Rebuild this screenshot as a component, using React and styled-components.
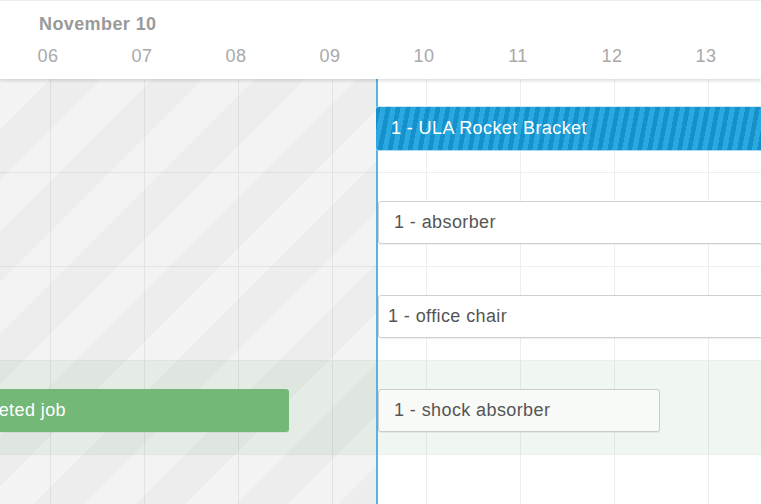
import React from 'react'
import styled, { createGlobalStyle, css } from 'styled-components'

const HOUR = 94
const ORIGIN = 50
const xAt = (h) => ORIGIN + (h - 6) * HOUR

const NOW = 9.468

const hours = ['06', '07', '08', '09', '10', '11', '12', '13']

const rows = [
    { id: 1, bar: { kind: 'active', start: NOW, end: 20, label: '1 - ULA Rocket Bracket' } },
    { id: 2, bar: { kind: 'planned', start: NOW + 0.022, end: 20, label: '1 - absorber' } },
    { id: 3, bar: { kind: 'planned', start: NOW + 0.022, end: 20, label: '1 - office chair', pad: 9 } },
    {
        id: 4,
        done: true,
        bars: [
            { kind: 'done', start: 4.72, end: 8.543, label: 'Completed job' },
            { kind: 'muted', start: NOW + 0.022, end: 12.49, label: '1 - shock absorber' },
        ],
    },
]

const GlobalStyle = createGlobalStyle`
    html, body, #root {
        margin: 0;
        height: 100%;
    }
    body {
        overflow: hidden;
        background: #fff;
        font-family: "Liberation Sans", Arial, Helvetica, sans-serif;
        letter-spacing: 0.4px;
    }
`

function Timeline() {
    const nowX = xAt(NOW)

    return (
        <Wrapper>
            <Header>
                <Title>November 10</Title>
                <Hours>
                    {hours.map(h => (
                        <Hour key={h}>{h}</Hour>
                    ))}
                </Hours>
            </Header>
            <Body>
                <Past style={{ width: nowX + 2 }} />
                {rows.map(row => {
                    const bars = row.bars || [row.bar]
                    return (
                        <Row key={row.id} $done={row.done}>
                            {bars.map(bar => (
                                <Bar
                                    key={bar.label}
                                    $kind={bar.kind}
                                    $pad={bar.pad}
                                    style={{
                                        left: xAt(bar.start),
                                        width: xAt(bar.end) - xAt(bar.start),
                                    }}
                                >
                                    {bar.label}
                                </Bar>
                            ))}
                        </Row>
                    )
                })}
            </Body>
        </Wrapper>
    )
}

export default function App() {
    return (
        <>
            <GlobalStyle />
            <Timeline />
        </>
    )
}

const Wrapper = styled.div`
    display: flex;
    flex-direction: column;
    height: 100vh;
    overflow: hidden;
`

const Header = styled.div`
    position: relative;
    z-index: 3;
    box-sizing: border-box;
    height: 79px;
    padding-top: 12px;
    background: #fff;
    border-top: 1px solid #ececec;
    box-shadow: 0 2px 3px rgba(0, 0, 0, 0.13);
`

const Title = styled.div`
    padding-left: 39px;
    font-size: 18px;
    line-height: 22px;
    font-weight: bold;
    color: #9a9a9a;
`

const Hours = styled.div`
    display: flex;
    margin-top: 10px;
    padding-left: 1px;
`

const Hour = styled.div`
    flex: 0 0 ${HOUR}px;
    text-align: center;
    font-size: 18px;
    line-height: 22px;
    color: #a9a9a9;
`

const Body = styled.div`
    position: relative;
    flex: 1;
    background-color: #fff;
    background-image: linear-gradient(90deg, #eeeeee 1px, transparent 1px);
    background-size: ${HOUR}px 100%;
    background-position: ${ORIGIN}px 0;
`

const Past = styled.div`
    position: absolute;
    top: 0;
    left: 0;
    bottom: 0;
    z-index: 1;
    box-sizing: border-box;
    border-right: 2px solid #56b3e2;
    background: repeating-linear-gradient(
        135deg,
        rgba(0, 0, 0, 0.046) 0 36px,
        rgba(0, 0, 0, 0.07) 36px 72px
    );
`

const Row = styled.div`
    position: relative;
    box-sizing: border-box;
    height: 94px;
    border-bottom: 1px solid #eeeeee;
    background: ${p => (p.$done ? 'rgba(114, 184, 119, 0.11)' : 'transparent')};
`

const kinds = {
    active: css`
        color: #fff;
        background: repeating-linear-gradient(
            101deg,
            #1690ca 0 4.6px,
            #2aa9e1 4.6px 9.8px
        );
        box-shadow: 0 1px 0 #a6d8f0, 0 -1px 0 #cde9f6;
    `,
    planned: css`
        color: #555;
        background: #fff;
        border: 1px solid #cfcfcf;
        box-shadow: 0 1px 1px rgba(0, 0, 0, 0.06);
    `,
    muted: css`
        color: #555;
        background: #f8faf8;
        border: 1px solid #cbcbcb;
        box-shadow: 0 1px 1px rgba(0, 0, 0, 0.06);
    `,
    done: css`
        color: #fff;
        background: #73b877;
        box-shadow: 0 1px 0 rgba(0, 0, 0, 0.05);
    `,
}

const Bar = styled.div`
    position: absolute;
    top: 28px;
    z-index: 2;
    box-sizing: border-box;
    height: 43px;
    display: flex;
    align-items: center;
    padding-left: ${p => p.$pad || 15}px;
    border-radius: 3px;
    font-size: 18px;
    white-space: nowrap;
    overflow: hidden;
    ${p => kinds[p.$kind]}
`
